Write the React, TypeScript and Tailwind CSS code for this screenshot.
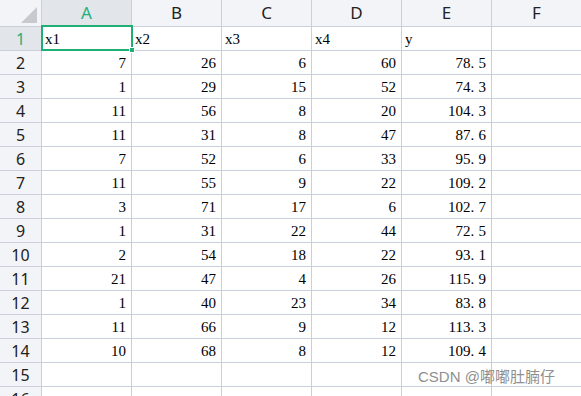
const cols = ['A', 'B', 'C', 'D', 'E', 'F']

const rows: string[][] = [
  ['x1', 'x2', 'x3', 'x4', 'y'],
  ['7', '26', '6', '60', '78.5'],
  ['1', '29', '15', '52', '74.3'],
  ['11', '56', '8', '20', '104.3'],
  ['11', '31', '8', '47', '87.6'],
  ['7', '52', '6', '33', '95.9'],
  ['11', '55', '9', '22', '109.2'],
  ['3', '71', '17', '6', '102.7'],
  ['1', '31', '22', '44', '72.5'],
  ['2', '54', '18', '22', '93.1'],
  ['21', '47', '4', '26', '115.9'],
  ['1', '40', '23', '34', '83.8'],
  ['11', '66', '9', '12', '113.3'],
  ['10', '68', '8', '12', '109.4'],
  [],
  [],
]

const headFont = { fontFamily: '"Noto Sans", "Liberation Sans", sans-serif' }
const cellFont = { fontFamily: '"Liberation Serif", "DejaVu Serif", serif' }

// SimSun-style half-width period: give the dot a full digit cell
function Num({ v }: { v: string }) {
  const [a, b] = v.split('.')
  if (b === undefined) return <>{v}</>
  return (
    <>
      {a}
      <span className="inline-block w-[8px]">.</span>
      {b}
    </>
  )
}

export default function App() {
  return (
    <div className="relative w-[581px] h-[396px] overflow-hidden bg-white">
      <div className="grid grid-cols-[41px_repeat(6,89px)] grid-rows-[26px_repeat(16,23px)] gap-px bg-[#c9cfdb] w-[581px]">
        {/* corner */}
        <div className="flex items-end justify-end pr-[4px] pb-[3px] bg-[#f3f4f7]">
          <svg width="16" height="16" viewBox="0 0 16 16">
            <polygon points="16,0 16,16 0,16" fill="#c6c9ce" />
          </svg>
        </div>
        {cols.map((c) => (
          <div
            key={c}
            style={headFont}
            className={`flex items-center justify-center text-[17px] ${
              c === 'A' ? 'bg-[#e2e5ea] text-[#22b07a]' : 'bg-[#f3f4f7] text-[#222]'
            }`}
          >
            {c}
          </div>
        ))}
        {rows.map((r, i) => (
          <Row key={i} n={i + 1} cells={r} />
        ))}
      </div>

      {/* selected cell A1 */}
      <div className="absolute left-[41px] top-[25px] w-[92px] h-[26px] border-2 border-[#1fae74]" />
      <div className="absolute left-[129px] top-[47px] w-[6px] h-[6px] bg-[#1fae74] border border-white" />

      <div
        style={{ fontFamily: '"Liberation Sans", "Noto Sans CJK SC", sans-serif' }}
        className="absolute left-[418px] top-[369px] text-[15px] text-[#8f8f8f] leading-none"
      >
        CSDN @嘟嘟肚腩仔
      </div>
    </div>
  )
}

function Row({ n, cells }: { n: number; cells: string[] }) {
  const selected = n === 1
  return (
    <>
      <div
        style={headFont}
        className={`flex items-center justify-center text-[16px] ${
          selected ? 'bg-[#e2e5ea] text-[#22b07a]' : 'bg-[#f3f4f7] text-[#222]'
        }`}
      >
        {n}
      </div>
      {cols.map((c, j) => {
        const v = cells[j] ?? ''
        const isText = n === 1
        return (
          <div
            key={c}
            style={cellFont}
            className={`flex items-end pb-[1px] bg-white text-[15px] text-black leading-[20px] ${
              isText ? 'justify-start pl-[3px]' : 'justify-end pr-[5px]'
            }`}
          >
            {isText ? v : <Num v={v} />}
          </div>
        )
      })}
    </>
  )
}
